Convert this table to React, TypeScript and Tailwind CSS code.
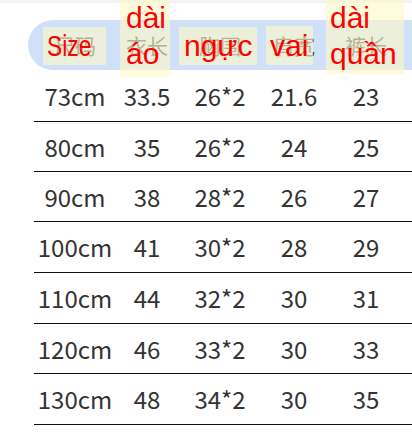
import React from "react";

const rows: string[][] = [
  ["73cm", "33.5", "26*2", "21.6", "23"],
  ["80cm", "35", "26*2", "24", "25"],
  ["90cm", "38", "28*2", "26", "27"],
  ["100cm", "41", "30*2", "28", "29"],
  ["110cm", "44", "32*2", "30", "31"],
  ["120cm", "46", "33*2", "30", "33"],
  ["130cm", "48", "34*2", "30", "35"],
];

const rowH = ["h-[52px]", "h-[50px]", "h-[50px]", "h-[51px]", "h-[51px]", "h-[50px]", "h-[51px]"];
const colW = ["w-[82px]", "w-[62px]", "w-[84px]", "w-[64px]", "w-[80px]"];
const heads = ["尺码", "衣长", "胸围", "肩宽", "裤长"];

const label =
  "absolute bg-[rgba(255,250,200,0.6)] text-[30px] text-[#ff0000] font-['Liberation_Sans',Arial,sans-serif]";

export default function App() {
  return (
    <div className="relative w-[412px] h-[432px] overflow-hidden bg-white font-['Noto_Sans_CJK_SC','Noto_Sans',sans-serif]">
      <div className="h-[3px] bg-[#f3f3f3]" />
      <div className="mt-[17px] ml-[28px] h-[50px] rounded-l-full bg-[#cfe0f8] pl-[6px] flex items-center">
        {heads.map((h, i) => (
          <div key={h} className={`${colW[i]} shrink-0 text-center text-[21px] leading-none text-[#444]`}>
            {h}
          </div>
        ))}
      </div>
      <div className="ml-[34px] flex flex-col">
        {rows.map((r, ri) => (
          <div key={ri} className={`${rowH[ri]} flex items-center border-b border-[#111] box-border`}>
            {r.map((c, ci) => (
              <div key={ci} className={`${colW[ci]} shrink-0 text-center text-[24px] text-[#333] leading-none`}>
                {c}
              </div>
            ))}
          </div>
        ))}
      </div>

      {/* annotation overlays pasted over the header */}
      <div className={`${label} left-[43px] top-[27px] w-[63px] h-[38px] pl-[4px] leading-[38px]`}>
        <span className="inline-block origin-left scale-x-[0.76]">Size</span>
      </div>
      <div className={`${label} left-[120px] top-0 w-[50px] h-[77px] pl-[6px] leading-[36px]`}>
        dài<br />áo
      </div>
      <div className={`${label} left-[179px] top-[27px] w-[78px] h-[38px] pl-[5px] leading-[38px]`}>
        ngực
      </div>
      <div className={`${label} left-[266px] top-[26px] w-[47px] h-[39px] pl-[4px] leading-[39px]`}>
        vai
      </div>
      <div className={`${label} left-[326px] top-0 w-[78px] h-[74px] pl-[4px] leading-[36px]`}>
        dài<br />quần
      </div>
    </div>
  );
}
